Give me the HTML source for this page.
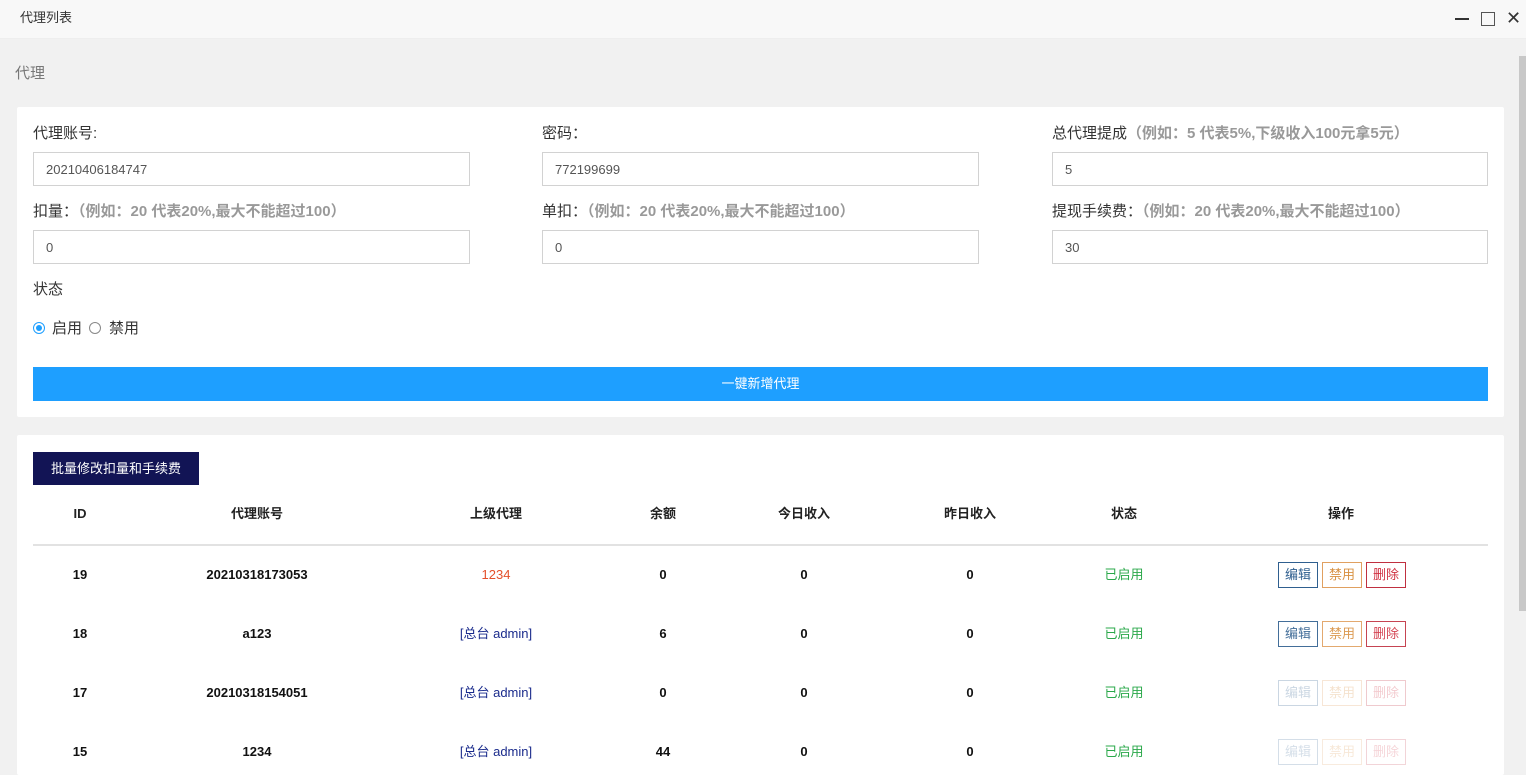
<!DOCTYPE html><html><head><meta charset="utf-8"><style>
body{margin:0;width:1526px;height:765px;overflow:hidden;background:#f1f1f1;font-family:"Liberation Sans","Noto Sans CJK SC",sans-serif;position:relative}
.top{position:absolute;left:0;top:0;width:1526px;height:38px;background:#f8f8f8;border-bottom:1px solid #eee}
.top span{position:absolute;left:20px;top:10px;font-size:13px;color:#333;line-height:16px}
.ab{position:absolute}
.card{position:absolute;left:17px;width:1487px;background:#fff;border-radius:2px}
.lbl{position:absolute;font-size:15px;color:#333;line-height:18px}
.lbl i{font-style:normal;color:#999;font-weight:bold}
.inp{position:absolute;width:437px;height:34px;border:1px solid #d2d2d2;box-sizing:border-box;font-size:13px;color:#555;padding:10px 12px;line-height:13px}
.btn{position:absolute;left:16px;top:260px;width:1455px;height:34px;background:#1e9fff;color:#fff;font-size:13px;text-align:center;line-height:34px}
.th,.td{position:absolute;font-size:13px;transform:translateX(-50%);white-space:nowrap;line-height:16px}
.th{font-weight:bold;top:71px;color:#222}
.td{color:#111}
.ob{position:absolute;width:40px;height:26px;box-sizing:border-box;border:1px solid;font-size:13px;text-align:center;line-height:24px}
</style></head><body>
<div class="top"><span>代理列表</span>
<div class="ab" style="left:1455px;top:18px;width:14px;height:2px;background:#333"></div>
<div class="ab" style="left:1481px;top:12px;width:12px;height:12px;border:1px solid #555"></div>
<div class="ab" style="left:1506px;top:8px;font-size:18px;line-height:20px;color:#333">✕</div>
</div>
<div class="ab" style="left:15px;top:65px;font-size:15px;color:#777;line-height:18px">代理</div>
<div class="ab" style="left:1519px;top:56px;width:7px;height:555px;background:#c8c8c8"></div>
<div class="card" style="top:107px;height:310px">
<div class="lbl" style="left:16px;top:18px">代理账号:</div>
<div class="inp" style="left:16px;top:45px">20210406184747</div>
<div class="lbl" style="left:525px;top:18px">密码：</div>
<div class="inp" style="left:525px;top:45px">772199699</div>
<div class="lbl" style="left:1035px;top:18px">总代理提成<i>（例如：5 代表5%,下级收入100元拿5元）</i></div>
<div class="inp" style="left:1035px;top:45px;width:436px">5</div>
<div class="lbl" style="left:16px;top:96px">扣量：<i>（例如：20 代表20%,最大不能超过100）</i></div>
<div class="inp" style="left:16px;top:123px">0</div>
<div class="lbl" style="left:525px;top:96px">单扣：<i>（例如：20 代表20%,最大不能超过100）</i></div>
<div class="inp" style="left:525px;top:123px">0</div>
<div class="lbl" style="left:1035px;top:96px">提现手续费：<i>（例如：20 代表20%,最大不能超过100）</i></div>
<div class="inp" style="left:1035px;top:123px;width:436px">30</div>
<div class="lbl" style="left:16px;top:174px">状态</div>
<div class="ab" style="left:16px;top:215px;width:12px;height:12px;border-radius:50%;border:1px solid #1e9fff;box-sizing:border-box"><div style="margin:2px;width:6px;height:6px;border-radius:50%;background:#1e9fff"></div></div>
<div class="lbl" style="left:35px;top:213px">启用</div>
<div class="ab" style="left:72px;top:215px;width:12px;height:12px;border-radius:50%;border:1px solid #888;box-sizing:border-box"></div>
<div class="lbl" style="left:92px;top:213px">禁用</div>
<div class="btn">一键新增代理</div>
</div>
<div class="card" style="top:435px;height:340px">
<div class="ab" style="left:16px;top:17px;width:166px;height:33px;background:#121455;color:#fff;font-size:13px;line-height:33px;text-align:center">批量修改扣量和手续费</div>
<div class="th" style="left:63px">ID</div><div class="th" style="left:240px">代理账号</div><div class="th" style="left:479px">上级代理</div><div class="th" style="left:646px">余额</div><div class="th" style="left:787px">今日收入</div><div class="th" style="left:953px">昨日收入</div><div class="th" style="left:1107px">状态</div><div class="th" style="left:1324px">操作</div>
<div class="ab" style="left:16px;top:109px;width:1455px;height:2px;background:#e2e2e2"></div>
</div>
<div id="rows"></div>
<script>
var d=[["19","20210318173053","1234","0",1],["18","a123","[总台 admin]","6",.9],["17","20210318154051","[总台 admin]","0",.25],["15","1234","[总台 admin]","44",.2]];
var h="";d.forEach(function(r,i){var y=567+i*59;var c=i==0?"#e4502b":"#1a2b8c";
h+='<div class="td" style="left:80px;top:'+y+'px;font-weight:bold">'+r[0]+'</div><div class="td" style="left:257px;top:'+y+'px;font-weight:bold">'+r[1]+'</div><div class="td" style="left:496px;top:'+y+'px;color:'+c+'">'+r[2]+'</div><div class="td" style="left:663px;top:'+y+'px;font-weight:bold">'+r[3]+'</div><div class="td" style="left:804px;top:'+y+'px;font-weight:bold">0</div><div class="td" style="left:970px;top:'+y+'px;font-weight:bold">0</div><div class="td" style="left:1124px;top:'+y+'px;color:#2aa84a">已启用</div>';
h+='<div style="opacity:'+r[4]+'"><div class="ob" style="left:1278px;top:'+(y-5)+'px;border-color:#2f5f8f;color:#2f5f8f">编辑</div><div class="ob" style="left:1322px;top:'+(y-5)+'px;border-color:#e0a060;color:#d89040">禁用</div><div class="ob" style="left:1366px;top:'+(y-5)+'px;border-color:#c03040;color:#d03040">删除</div></div>';});
document.getElementById("rows").innerHTML=h;
</script>
</body></html>
